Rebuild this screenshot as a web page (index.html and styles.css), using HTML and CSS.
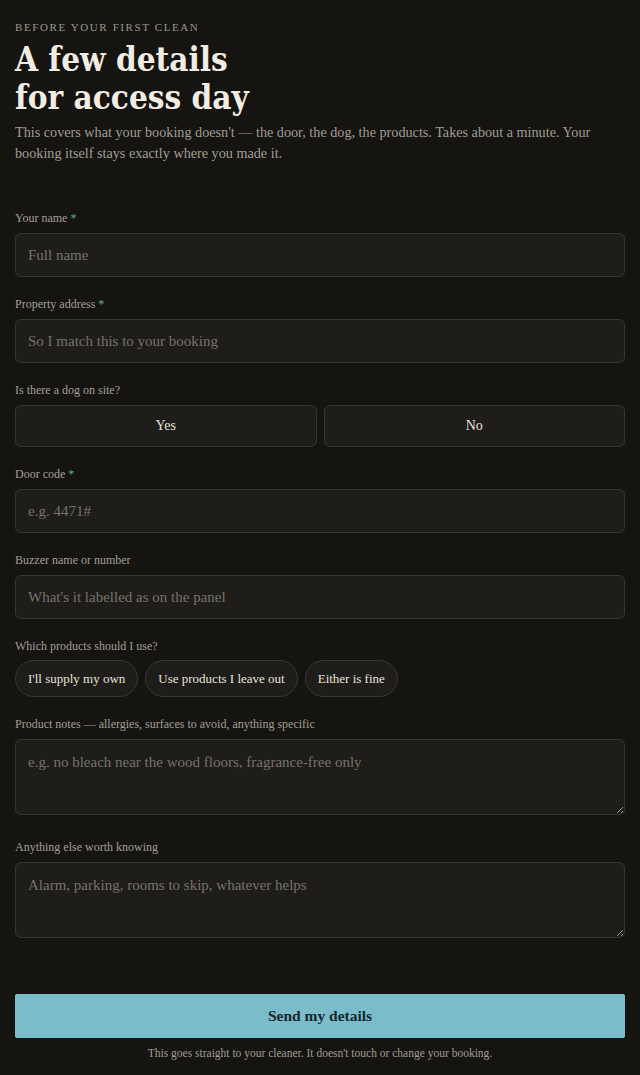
FILE: index.html
```html
<!DOCTYPE html>
<html lang="en">
<head>
    <meta charset="UTF-8">
    <meta name="viewport" content="width=device-width, initial-scale=1.0">
    <title>Access day details</title>
    <link rel="stylesheet" href="styles.css">
</head>
<body>
    <main class="page">
        <header class="intro">
            <div class="eyebrow">Before your first clean</div>
            <h1 class="title">A few details<br>for access day</h1>
            <p class="lede">This covers what your booking doesn't — the door, the dog, the products. Takes about a minute. Your booking itself stays exactly where you made it.</p>
        </header>

        <form class="form">
            <div class="field">
                <label class="label" for="name">Your name <span class="req">*</span></label>
                <input class="input" id="name" type="text" placeholder="Full name">
            </div>

            <div class="field">
                <label class="label" for="address">Property address <span class="req">*</span></label>
                <input class="input" id="address" type="text" placeholder="So I match this to your booking">
            </div>

            <div class="field">
                <div class="label">Is there a dog on site?</div>
                <div class="toggle">
                    <button type="button" class="toggle-btn">Yes</button>
                    <button type="button" class="toggle-btn">No</button>
                </div>
            </div>

            <div class="field">
                <label class="label" for="door">Door code <span class="req">*</span></label>
                <input class="input" id="door" type="text" placeholder="e.g. 4471#">
            </div>

            <div class="field">
                <label class="label" for="buzzer">Buzzer name or number</label>
                <input class="input" id="buzzer" type="text" placeholder="What's it labelled as on the panel">
            </div>

            <div class="field">
                <div class="label">Which products should I use?</div>
                <div class="pills">
                    <button type="button" class="pill">I'll supply my own</button>
                    <button type="button" class="pill">Use products I leave out</button>
                    <button type="button" class="pill">Either is fine</button>
                </div>
            </div>

            <div class="field">
                <label class="label" for="notes">Product notes — allergies, surfaces to avoid, anything specific</label>
                <textarea class="input area" id="notes" placeholder="e.g. no bleach near the wood floors, fragrance-free only"></textarea>
            </div>

            <div class="field">
                <label class="label" for="extra">Anything else worth knowing</label>
                <textarea class="input area" id="extra" placeholder="Alarm, parking, rooms to skip, whatever helps"></textarea>
            </div>

            <button type="submit" class="submit">Send my details</button>
            <p class="footnote">This goes straight to your cleaner. It doesn't touch or change your booking.</p>
        </form>
    </main>
</body>
</html>
```

FILE: styles.css
```css
* {
    margin: 0;
    padding: 0;
    box-sizing: border-box;
}

body {
    background: #151411;
    color: #ece8de;
    font-family: 'Liberation Serif', 'DejaVu Serif', serif;
}

.page {
    padding: 20px 15px 16px;
}

.eyebrow {
    font-size: 11px;
    letter-spacing: 1.6px;
    text-transform: uppercase;
    color: #9c988e;
    line-height: 14px;
}

/* titre façon machine à écrire */
.title {
    font-family: 'DejaVu Serif Condensed', 'DejaVu Serif', serif;
    font-stretch: condensed;
    font-weight: bold;
    font-size: 33px;
    line-height: 38px;
    color: #f1ede3;
    margin-top: 7px;
}

.lede {
    font-size: 14.2px;
    line-height: 21px;
    color: #a19d93;
    margin-top: 5px;
}

.form {
    display: flex;
    flex-direction: column;
    gap: 20px;
    margin-top: 47px;
}

.field {
    display: flex;
    flex-direction: column;
    gap: 8px;
}

.label {
    font-size: 12px;
    line-height: 14px;
    color: #a39f95;
}

.req {
    color: #5fa89a;
}

.input {
    width: 100%;
    height: 44px;
    background: #1f1d1a;
    border: 1px solid #37352f;
    border-radius: 6px;
    padding: 0 12px;
    font-family: inherit;
    font-size: 15px;
    color: #ece8de;
    outline: none;
}

.input::placeholder {
    color: #76726a;
}

.area {
    height: 76px;
    padding: 12px;
    line-height: 20px;
    resize: vertical;
    margin-bottom: 5px;
}

.toggle {
    display: grid;
    grid-template-columns: 1fr 1fr;
    gap: 7px;
}

.toggle-btn {
    height: 42px;
    background: #1f1d1a;
    border: 1px solid #37352f;
    border-radius: 6px;
    font-family: inherit;
    font-size: 14px;
    color: #e6e2d8;
}

.pills {
    display: flex;
    gap: 7px;
    margin-top: -1px;
}

.pill {
    height: 37px;
    padding: 0 12px;
    background: #1f1d1a;
    border: 1px solid #3a3832;
    border-radius: 19px;
    font-family: inherit;
    font-size: 13px;
    color: #e6e2d8;
}

.submit {
    margin-top: 31px;
    height: 44px;
    background: #7bbccb;
    border: none;
    border-radius: 2px;
    font-family: inherit;
    font-weight: bold;
    font-size: 15.5px;
    color: #15272d;
}

.footnote {
    margin-top: -11px;
    text-align: center;
    font-size: 11.5px;
    color: #a19d93;
}
```
